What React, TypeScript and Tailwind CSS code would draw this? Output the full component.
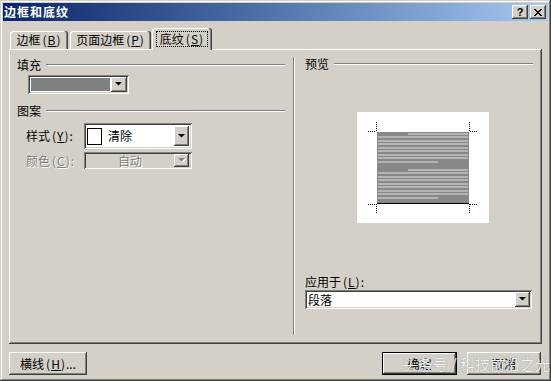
import type { ReactNode } from "react"

// classic 3D bevels
const raised =
  "shadow-[inset_-1px_-1px_#404040,inset_1px_1px_#ffffff,inset_-2px_-2px_#808080,inset_2px_2px_#d4d0c8]"
const sunken =
  "shadow-[inset_1px_1px_#808080,inset_-1px_-1px_#ffffff,inset_2px_2px_#404040,inset_-2px_-2px_#d4d0c8]"
const font = "font-['Noto_Sans_CJK_SC','Noto_Sans',sans-serif]"

// accelerator key, drawn like the half-width "(B)" of the old bitmap font
function Acc({ k }: { k: string }) {
  return (
    <span className="ml-[2px] tracking-[1px]">
      (<span className="underline underline-offset-[1px]">{k}</span>)
    </span>
  )
}

function Arrow({ disabled = false, className = "" }: { disabled?: boolean; className?: string }) {
  return (
    <div className={"flex items-center justify-center bg-[#d4d0c8] " + raised + " " + className}>
      <svg width="8" height="5" viewBox="0 0 8 5">
        {disabled && <path d="M1 1h7L4.5 4.5z" fill="#ffffff" />}
        <path d="M0 0h7L3.5 3.5z" fill={disabled ? "#808080" : "#000000"} />
      </svg>
    </div>
  )
}

function GroupHeader({ title, className = "" }: { title: string; className?: string }) {
  return (
    <div className={"flex items-center h-[12px] " + className}>
      <span className="leading-[12px]">{title}</span>
      <div className="ml-[5px] flex-1 h-[2px] border-t border-t-[#808080] border-b border-b-white" />
    </div>
  )
}

function Tab({ children, width, selected = false }: { children: ReactNode; width: string; selected?: boolean }) {
  return (
    <div
      className={
        "flex items-center justify-center rounded-t-[3px] bg-[#d4d0c8] shadow-[inset_-1px_0_#404040,inset_-2px_0_#808080,inset_1px_1px_#ffffff] " +
        width +
        (selected ? " h-[22px] -mb-[1px] relative z-10" : " h-[18px]")
      }
    >
      {children}
    </div>
  )
}

function Preview() {
  const p1 = [21, 24, 28, 31, 35, 38, 42, 45, 49]
  const p2 = [57, 60, 64, 67, 71, 74, 78, 81, 85]
  const rows = (ys: number[]) =>
    ys.map((y, i) => {
      const x1 = i === 0 ? 51 : 21
      const x2 = i === ys.length - 1 ? 81 : 111
      return <rect key={y} x={x1} y={y} width={x2 - x1} height={2} fill="#b4b4b4" />
    })
  return (
    <svg width="132" height="111" viewBox="0 0 132 111" className="block">
      <rect x="0" y="0" width="132" height="111" fill="#ffffff" />
      <rect x="20" y="20" width="92" height="71" fill="#888888" />
      {rows(p1)}
      {rows(p2)}
      <rect x="20" y="91" width="92" height="1" fill="#000000" />
      <g stroke="#000000" strokeWidth="1" strokeDasharray="1 1" fill="none">
        <path d="M11 19.5h8M19.5 10v9" />
        <path d="M113 19.5h8M112.5 10v9" />
        <path d="M11 92.5h8M19.5 92v9" />
        <path d="M113 92.5h8M112.5 92v9" />
      </g>
    </svg>
  )
}

function Button({ children, width, isDefault = false }: { children: ReactNode; width: string; isDefault?: boolean }) {
  return (
    <div
      className={
        "h-[23px] flex items-center justify-center bg-[#d4d0c8] " +
        width +
        (isDefault ? " border border-black " : " ") +
        raised
      }
    >
      {children}
    </div>
  )
}

export default function App() {
  return (
    <div
      className={
        "relative w-[551px] h-[381px] overflow-hidden bg-[#d4d0c8] p-[3px] text-[12px] leading-[12px] text-black select-none " +
        font +
        " shadow-[inset_-1px_-1px_#404040,inset_1px_1px_#d4d0c8,inset_-2px_-2px_#808080,inset_2px_2px_#ffffff]"
      }
    >
      {/* Title bar */}
      <div className="h-[18px] flex items-center justify-between bg-gradient-to-r from-[#0a246a] to-[#a6caf0] pl-[1px] pr-[2px]">
        <span className="text-white font-bold tracking-[1px] text-[12px]">边框和底纹</span>
        <div className="flex">
          <div className={"w-[16px] h-[14px] flex items-center justify-center bg-[#d4d0c8] text-[11px] font-bold " + raised}>
            <span className="font-['Liberation_Sans',sans-serif] -mt-[1px]">?</span>
          </div>
          <div className={"ml-[2px] w-[16px] h-[14px] flex items-center justify-center bg-[#d4d0c8] " + raised}>
            <svg width="8" height="7" viewBox="0 0 8 7">
              <path d="M0 0l7 7M1 0l7 7M7 0L0 7M8 0L1 7" stroke="#000" strokeWidth="1" />
            </svg>
          </div>
        </div>
      </div>

      <div className="px-[6px] pt-[7px]">
        {/* Tabs */}
        <div className="flex items-end h-[21px] pl-[1px]">
          <Tab width="w-[58px]">
            <span>边框<Acc k="B" /></span>
          </Tab>
          <div className="ml-[2px]">
            <Tab width="w-[81px]">
              <span>页面边框<Acc k="P" /></span>
            </Tab>
          </div>
          <div className="ml-[1px]">
            <Tab width="w-[60px]" selected>
              <span className="h-[16px] px-[3px] flex items-center border border-dotted border-black -mt-[1px]">
                底纹<Acc k="S" />
              </span>
            </Tab>
          </div>
        </div>

        {/* Panel */}
        <div className="h-[295px] flex pt-[8px] pb-[9px] shadow-[inset_-1px_-1px_#404040,inset_1px_1px_#ffffff,inset_-2px_-2px_#808080]">
          {/* Left column */}
          <div className="w-[284px] pl-[8px] pr-[8px] flex flex-col">
            <GroupHeader title="填充" className="mt-[2px]" />
            <div className={"mt-[4px] ml-[11px] w-[101px] h-[19px] bg-white flex p-[2px] " + sunken}>
              <div className="flex-1 m-[1px] bg-[#808080]" />
              <Arrow className="w-[16px]" />
            </div>

            <GroupHeader title="图案" className="mt-[11px]" />
            <div className="mt-[6px] ml-[9px] flex items-center h-[26px]">
              <span className="w-[58px]">
                样式<Acc k="Y" />:
              </span>
              <div className={"w-[108px] h-[26px] bg-white flex items-center p-[2px] " + sunken}>
                <div className="ml-[1px] w-[15px] h-[17px] border border-black bg-white" />
                <span className="ml-[6px] flex-1">清除</span>
                <Arrow className="w-[15px] h-[20px] mr-[1px]" />
              </div>
            </div>
            <div className="mt-[3px] ml-[9px] flex items-center h-[17px]">
              <span className="w-[58px] text-[#808080] [text-shadow:1px_1px_#ffffff]">
                颜色<Acc k="C" />:
              </span>
              <div className={"w-[108px] h-[17px] flex items-center p-[2px] " + sunken}>
                <span className="flex-1 text-center text-[#808080] [text-shadow:1px_1px_#ffffff]">自动</span>
                <Arrow disabled className="w-[15px] h-[13px] mr-[1px]" />
              </div>
            </div>
          </div>

          {/* Divider */}
          <div className="w-[2px] border-l border-l-[#808080] border-r border-r-white" />

          {/* Right column */}
          <div className="flex-1 pl-[10px] pr-[9px] flex flex-col">
            <GroupHeader title="预览" className="mt-[1px]" />
            <div className="mt-[42px] ml-[52px]">
              <Preview />
            </div>
            <span className="mt-[53px] h-[12px]">
              应用于<Acc k="L" />:
            </span>
            <div className={"mt-[2px] w-[227px] h-[19px] bg-white flex items-center p-[2px] " + sunken}>
              <span className="flex-1 pl-[1px]">段落</span>
              <Arrow className="w-[15px] h-[15px]" />
            </div>
          </div>
        </div>

        {/* Buttons */}
        <div className="mt-[8px] flex items-center justify-between pr-[1px]">
          <Button width="w-[78px]">
            <span>
              横线<Acc k="H" />...
            </span>
          </Button>
          <div className="flex gap-[10px]">
            <Button width="w-[75px]" isDefault>
              确定
            </Button>
            <Button width="w-[74px]">取消</Button>
          </div>
        </div>
      </div>

      {/* Watermark over the buttons */}
      <div className="absolute right-[1px] top-[356px] text-[15px] leading-[16px] text-white/90 [text-shadow:0_0_1px_#666666] whitespace-nowrap">
        头条号 / 科技前沿之光
      </div>
    </div>
  )
}
